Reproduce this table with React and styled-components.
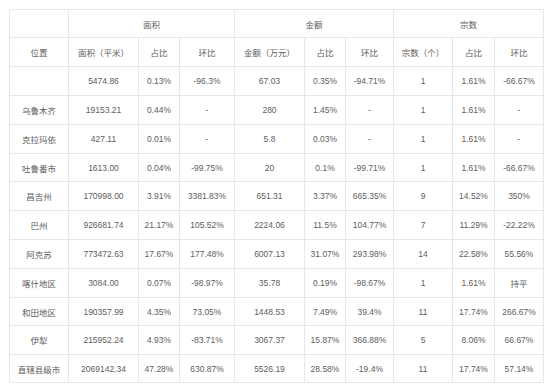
import React from "react";
import styled, { createGlobalStyle } from "styled-components";

const Global = createGlobalStyle`
  html, body { margin: 0; padding: 0; background: #fff; }
  body { font-family: "Liberation Sans", "Noto Sans CJK SC", sans-serif; }
`;

const Page = styled.div`
  padding: 9px 0 0 9px;
`;

const Grid = styled.div`
  display: grid;
  grid-template-columns: 58px 69px 40px 54px 69px 40px 47px 58px 41px 48px;
  grid-template-rows: 27px 28px 28px 28px 28px 27px 28px 28px 28px 28px 27px 28px 27px;
  gap: 1px;
  padding: 1px;
  background: #e8e8e8;
  width: max-content;
`;

const Cell = styled.div`
  background: #fff;
  display: flex;
  align-items: center;
  justify-content: center;
  font-size: 8.5px;
  color: #5e5e5e;
  white-space: nowrap;
  grid-column: ${(p) => (p.$span ? `span ${p.$span}` : "auto")};
`;

const head2 = ["位置", "面积（平米）", "占比", "环比", "金额（万元）", "占比", "环比", "宗数（个）", "占比", "环比"];

const rows = [
  ["", "5474.86", "0.13%", "-96.3%", "67.03", "0.35%", "-94.71%", "1", "1.61%", "-66.67%"],
  ["乌鲁木齐", "19153.21", "0.44%", "-", "280", "1.45%", "-", "1", "1.61%", "-"],
  ["克拉玛依", "427.11", "0.01%", "-", "5.8", "0.03%", "-", "1", "1.61%", "-"],
  ["吐鲁番市", "1613.00", "0.04%", "-99.75%", "20", "0.1%", "-99.71%", "1", "1.61%", "-66.67%"],
  ["昌吉州", "170998.00", "3.91%", "3381.83%", "651.31", "3.37%", "665.35%", "9", "14.52%", "350%"],
  ["巴州", "926681.74", "21.17%", "105.52%", "2224.06", "11.5%", "104.77%", "7", "11.29%", "-22.22%"],
  ["阿克苏", "773472.63", "17.67%", "177.48%", "6007.13", "31.07%", "293.98%", "14", "22.58%", "55.56%"],
  ["喀什地区", "3084.00", "0.07%", "-98.97%", "35.78", "0.19%", "-98.67%", "1", "1.61%", "持平"],
  ["和田地区", "190357.99", "4.35%", "73.05%", "1448.53", "7.49%", "39.4%", "11", "17.74%", "266.67%"],
  ["伊犁", "215952.24", "4.93%", "-83.71%", "3067.37", "15.87%", "366.88%", "5", "8.06%", "66.67%"],
  ["直辖县级市", "2069142.34", "47.28%", "630.87%", "5526.19", "28.58%", "-19.4%", "11", "17.74%", "57.14%"],
];

export default function App() {
  return (
    <Page>
      <Global />
      <Grid>
        <Cell />
        <Cell $span={3}>面积</Cell>
        <Cell $span={3}>金额</Cell>
        <Cell $span={3}>宗数</Cell>
        {head2.map((h, i) => (
          <Cell key={"h" + i}>{h}</Cell>
        ))}
        {rows.map((r, ri) =>
          r.map((c, ci) => <Cell key={ri + "-" + ci}>{c}</Cell>)
        )}
      </Grid>
    </Page>
  );
}
